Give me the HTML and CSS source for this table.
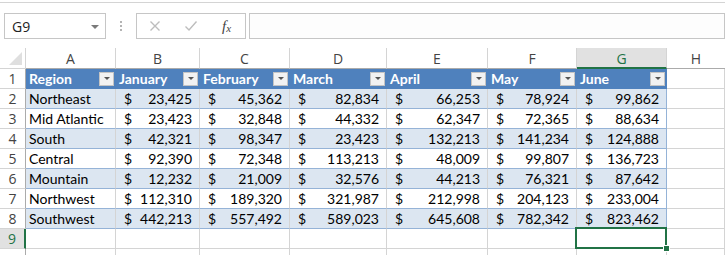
FILE: index.html
```html
<!DOCTYPE html>
<html>
<head>
<meta charset="utf-8">
<link rel="stylesheet" href="styles.css">
</head>
<body>
<div class="toolbar">
  <div class="namebox"><span class="nb-text">G9</span><span class="nb-arrow"></span></div>
  <div class="dots"><i></i><i></i><i></i></div>
  <div class="fbtns">
    <svg class="ico" width="14" height="14" viewBox="0 0 14 14"><path d="M2.5 2.5 L11.5 11.5 M11.5 2.5 L2.5 11.5" stroke="#bdbdbd" stroke-width="1.4" fill="none"/></svg>
    <svg class="ico" width="14" height="14" viewBox="0 0 14 14"><path d="M1.5 7.5 L5 11 L12.5 2.5" stroke="#bdbdbd" stroke-width="1.4" fill="none"/></svg>
    <span class="fx">f<sub>x</sub></span>
  </div>
  <div class="finput"></div>
</div>
<div class="sheet">
  <div class="corner"><span class="tri"></span></div>
  <div class="ch">A</div><div class="ch">B</div><div class="ch">C</div><div class="ch">D</div><div class="ch">E</div><div class="ch">F</div><div class="ch sel">G</div><div class="ch last">H</div>

  <div class="rh">1</div>
  <div class="c th"><span>Region</span><b class="fb"></b></div>
  <div class="c th"><span>January</span><b class="fb"></b></div>
  <div class="c th"><span>February</span><b class="fb"></b></div>
  <div class="c th"><span>March</span><b class="fb"></b></div>
  <div class="c th"><span>April</span><b class="fb"></b></div>
  <div class="c th"><span>May</span><b class="fb"></b></div>
  <div class="c th tend"><span>June</span><b class="fb"></b></div>
  <div class="c e"></div>

  <div class="rh">2</div>
  <div class="c t band">Northeast</div>
  <div class="c t band n"><span>$</span><span>23,425</span></div>
  <div class="c t band n"><span>$</span><span>45,362</span></div>
  <div class="c t band n"><span>$</span><span>82,834</span></div>
  <div class="c t band n"><span>$</span><span>66,253</span></div>
  <div class="c t band n"><span>$</span><span>78,924</span></div>
  <div class="c t band n tend"><span>$</span><span>99,862</span></div>
  <div class="c e"></div>

  <div class="rh">3</div>
  <div class="c t">Mid Atlantic</div>
  <div class="c t n"><span>$</span><span>23,423</span></div>
  <div class="c t n"><span>$</span><span>32,848</span></div>
  <div class="c t n"><span>$</span><span>44,332</span></div>
  <div class="c t n"><span>$</span><span>62,347</span></div>
  <div class="c t n"><span>$</span><span>72,365</span></div>
  <div class="c t n tend"><span>$</span><span>88,634</span></div>
  <div class="c e"></div>

  <div class="rh">4</div>
  <div class="c t band">South</div>
  <div class="c t band n"><span>$</span><span>42,321</span></div>
  <div class="c t band n"><span>$</span><span>98,347</span></div>
  <div class="c t band n"><span>$</span><span>23,423</span></div>
  <div class="c t band n"><span>$</span><span>132,213</span></div>
  <div class="c t band n"><span>$</span><span>141,234</span></div>
  <div class="c t band n tend"><span>$</span><span>124,888</span></div>
  <div class="c e"></div>

  <div class="rh">5</div>
  <div class="c t">Central</div>
  <div class="c t n"><span>$</span><span>92,390</span></div>
  <div class="c t n"><span>$</span><span>72,348</span></div>
  <div class="c t n"><span>$</span><span>113,213</span></div>
  <div class="c t n"><span>$</span><span>48,009</span></div>
  <div class="c t n"><span>$</span><span>99,807</span></div>
  <div class="c t n tend"><span>$</span><span>136,723</span></div>
  <div class="c e"></div>

  <div class="rh">6</div>
  <div class="c t band">Mountain</div>
  <div class="c t band n"><span>$</span><span>12,232</span></div>
  <div class="c t band n"><span>$</span><span>21,009</span></div>
  <div class="c t band n"><span>$</span><span>32,576</span></div>
  <div class="c t band n"><span>$</span><span>44,213</span></div>
  <div class="c t band n"><span>$</span><span>76,321</span></div>
  <div class="c t band n tend"><span>$</span><span>87,642</span></div>
  <div class="c e"></div>

  <div class="rh">7</div>
  <div class="c t">Northwest</div>
  <div class="c t n"><span>$</span><span>112,310</span></div>
  <div class="c t n"><span>$</span><span>189,320</span></div>
  <div class="c t n"><span>$</span><span>321,987</span></div>
  <div class="c t n"><span>$</span><span>212,998</span></div>
  <div class="c t n"><span>$</span><span>204,123</span></div>
  <div class="c t n tend"><span>$</span><span>233,004</span></div>
  <div class="c e"></div>

  <div class="rh">8</div>
  <div class="c t band">Southwest</div>
  <div class="c t band n"><span>$</span><span>442,213</span></div>
  <div class="c t band n"><span>$</span><span>557,492</span></div>
  <div class="c t band n"><span>$</span><span>589,023</span></div>
  <div class="c t band n"><span>$</span><span>645,608</span></div>
  <div class="c t band n"><span>$</span><span>782,342</span></div>
  <div class="c t band n tend"><span>$</span><span>823,462</span></div>
  <div class="c e"></div>

  <div class="rh selrow">9</div>
  <div class="c e"></div><div class="c e"></div><div class="c e"></div><div class="c e"></div><div class="c e"></div><div class="c e"></div>
  <div class="c e active"><span class="selbox"></span><span class="handle"></span></div>
  <div class="c e"></div>

  <div class="rh"></div>
  <div class="c e"></div><div class="c e"></div><div class="c e"></div><div class="c e"></div><div class="c e"></div><div class="c e"></div><div class="c e"></div><div class="c e"></div>
</div>
</body>
</html>
```

FILE: styles.css
```css
html, body {
  margin: 0;
  padding: 0;
  background: #fff;
}
body {
  width: 725px;
  height: 255px;
  overflow: hidden;
  font-family: Lato, "Liberation Sans", sans-serif;
}

/* formula bar */
.toolbar {
  margin-top: 2px;
  border-top: 1px solid #d4d4d4;
  display: flex;
  align-items: flex-start;
  padding-top: 10px;
  box-sizing: border-box;
  height: 46px;
}
.namebox {
  margin-left: 4px;
  width: 102px;
  height: 26px;
  box-sizing: border-box;
  border: 1px solid #c6c6c6;
  background: #fff;
  display: flex;
  align-items: center;
  justify-content: space-between;
  padding: 0 6px 0 7px;
}
.nb-text {
  font-family: "Open Sans", "Noto Sans", sans-serif;
  font-size: 14px;
  color: #222;
}
.nb-arrow {
  width: 0;
  height: 0;
  border-left: 4px solid transparent;
  border-right: 4px solid transparent;
  border-top: 4px solid #7a7a7a;
  margin-top: 1px;
}
.dots {
  width: 30px;
  height: 26px;
  display: flex;
  flex-direction: column;
  align-items: center;
  justify-content: center;
  gap: 2px;
}
.dots i {
  display: block;
  width: 2px;
  height: 2px;
  background: #b4b4b4;
}
.fbtns {
  width: 110px;
  height: 26px;
  box-sizing: border-box;
  border: 1px solid #c6c6c6;
  background: #fff;
  display: flex;
  align-items: center;
  padding-left: 11px;
  gap: 22px;
}
.fx {
  font-family: "Liberation Serif", "DejaVu Serif", serif;
  font-style: italic;
  font-size: 15px;
  color: #444;
  margin-left: 2px;
}
.fx sub {
  font-size: 11px;
  vertical-align: -1px;
}
.finput {
  margin-left: 3px;
  width: 476px;
  height: 26px;
  box-sizing: border-box;
  border: 1px solid #c6c6c6;
  background: #fdfdfd;
}

/* sheet */
.sheet {
  display: grid;
  grid-template-columns: 26px 90px 84px 90px 97px 101px 89px 90px 1fr;
  grid-template-rows: 21px repeat(9, 20px) 8px;
  font-size: 14px;
  color: #000;
}
.corner {
  border-right: 1px solid #d4d4d4;
  border-bottom: 1px solid #d4d4d4;
  position: relative;
}
.corner .tri {
  position: absolute;
  right: 3px;
  bottom: 3px;
  width: 0;
  height: 0;
  border-left: 13px solid transparent;
  border-bottom: 13px solid #dfdfdf;
}
.ch {
  border-right: 1px solid #d4d4d4;
  border-bottom: 1px solid #ababab;
  display: flex;
  align-items: center;
  justify-content: center;
  color: #444;
  font-size: 14px;
  font-family: "Open Sans", "Noto Sans", sans-serif;
  padding-top: 1px;
}
.ch.sel {
  background: #e1e1e1;
  color: #217346;
  border-bottom: 2px solid #217346;
}
.ch.last { border-right: none; }
.rh {
  border-right: 1px solid #ababab;
  border-bottom: 1px solid #d4d4d4;
  display: flex;
  align-items: center;
  justify-content: center;
  color: #444;
  font-size: 14px;
  font-family: "Open Sans", "Noto Sans", sans-serif;
}
.rh.selrow {
  background: #e1e1e1;
  color: #217346;
  border-right: 2px solid #217346;
}
.c {
  box-sizing: border-box;
  border-right: 1px solid #d4d4d4;
  border-bottom: 1px solid #d4d4d4;
  display: flex;
  align-items: center;
  white-space: nowrap;
  overflow: hidden;
  padding: 0 3px;
}
.c.t {
  border-bottom-color: #95b3d7;
}
.c.band {
  background: #dce6f1;
}
.c.n {
  justify-content: space-between;
  padding: 0 7px 0 8px;
}
.c.tend {
  border-right-color: #95b3d7;
}
.c.th {
  background: #4f81bd;
  color: #fff;
  font-weight: bold;
  justify-content: space-between;
  padding: 0 1px 0 3px;
  border-right-color: #4f81bd;
  border-bottom-color: #4f81bd;
}
.fb {
  width: 15px;
  height: 14px;
  box-sizing: border-box;
  background: #f2f2f2;
  border: 1px solid #c4c4c4;
  display: flex;
  align-items: center;
  justify-content: center;
}
.fb::after {
  content: "";
  width: 0;
  height: 0;
  border-left: 3px solid transparent;
  border-right: 3px solid transparent;
  border-top: 3px solid #555;
}
.c.active {
  position: relative;
  overflow: visible;
}
.selbox {
  position: absolute;
  left: -2px;
  top: -2px;
  right: -1px;
  bottom: -1px;
  border: 2px solid #217346;
}
.handle {
  position: absolute;
  right: -4px;
  bottom: -4px;
  width: 5px;
  height: 5px;
  background: #217346;
  border: 1px solid #fff;
  z-index: 2;
}
```
